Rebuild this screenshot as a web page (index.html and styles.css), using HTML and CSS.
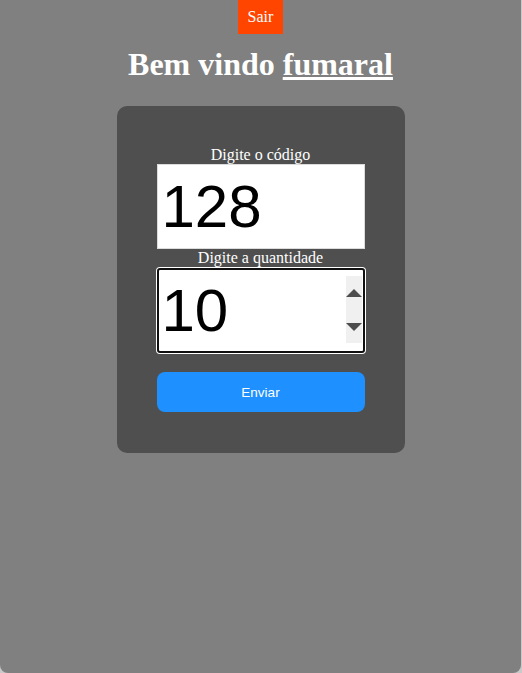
FILE: index.html
```html
<!DOCTYPE html>
<html lang="pt-BR">
<head>
<meta charset="utf-8">
<title>Bem vindo</title>
<link rel="stylesheet" href="styles.css">
</head>
<body>
  <button class="logout" type="button">Sair</button>
  <h1 class="title">Bem vindo <a href="#" class="user">fumaral</a></h1>
  <form class="card">
    <label class="field-label" for="codigo">Digite o código</label>
    <input id="codigo" class="field" type="number" value="128">
    <label class="field-label" for="qtd">Digite a quantidade</label>
    <div class="spin-wrap">
      <input id="qtd" class="field field-focus" type="number" value="10">
      <span class="spinner" aria-hidden="true">
        <svg width="16" height="67" viewBox="0 0 16 67">
          <polygon points="0,21 8,13 16,21" fill="#4d4d4d"/>
          <polygon points="0,47 16,47 8,55" fill="#4d4d4d"/>
        </svg>
      </span>
    </div>
    <button class="submit" type="button">Enviar</button>
  </form>
</body>
</html>
```
FILE: styles.css
```css
html {
  background: #c9c9c9;
  height: 100%;
}

body {
  margin: 0 1px 0 0;
  height: 673px;
  box-sizing: border-box;
  background: #808080;
  border-radius: 0 0 8px 8px;
  display: flex;
  flex-direction: column;
  align-items: center;
  font-family: "Liberation Serif", "Times New Roman", serif;
}

.logout {
  background: #ff4500;
  color: #fff;
  border: 0;
  margin: 0;
  font: 16px/18px "Liberation Serif", serif;
  padding: 8px 10px;
}

.title {
  margin: 12px 0 23px;
  color: #fff;
  font: 700 32px "Liberation Serif", serif;
}

.user {
  color: #fff;
  text-decoration: underline;
}

.card {
  width: 208px;
  padding: 40px 40px 41px;
  background: #4f4f4f;
  border-radius: 10px;
  display: flex;
  flex-direction: column;
  margin: 0;
}

.field-label {
  color: #fff;
  text-align: center;
  font: 16px/18px "Liberation Serif", serif;
}

.field-label + .spin-wrap {
  margin-top: 1px;
}

.field {
  width: 208px;
  height: 85px;
  box-sizing: border-box;
  margin: 0;
  padding: 0 3px 0 4px;
  border: 1px solid #dcdcdc;
  background: #fff;
  color: #000;
  font: 60px "Liberation Sans", Arial, sans-serif;
  outline: none;
}

.field::-webkit-inner-spin-button,
.field::-webkit-outer-spin-button {
  -webkit-appearance: none;
  margin: 0;
}

.spin-wrap {
  position: relative;
  display: flex;
}

.field-focus {
  border: 2px solid #101010;
  border-radius: 3px;
  box-shadow: 0 0 0 1px #fff;
  padding-left: 3px;
}

.spinner {
  position: absolute;
  right: 3px;
  top: 8px;
  width: 16px;
  height: 67px;
  background: #f0f0f0;
  display: flex;
}

.submit {
  margin-top: 19px;
  height: 40px;
  border: 0;
  border-radius: 8px;
  background: #1e90ff;
  color: #fff;
  font: 13.5px "Liberation Sans", Arial, sans-serif;
}
```
